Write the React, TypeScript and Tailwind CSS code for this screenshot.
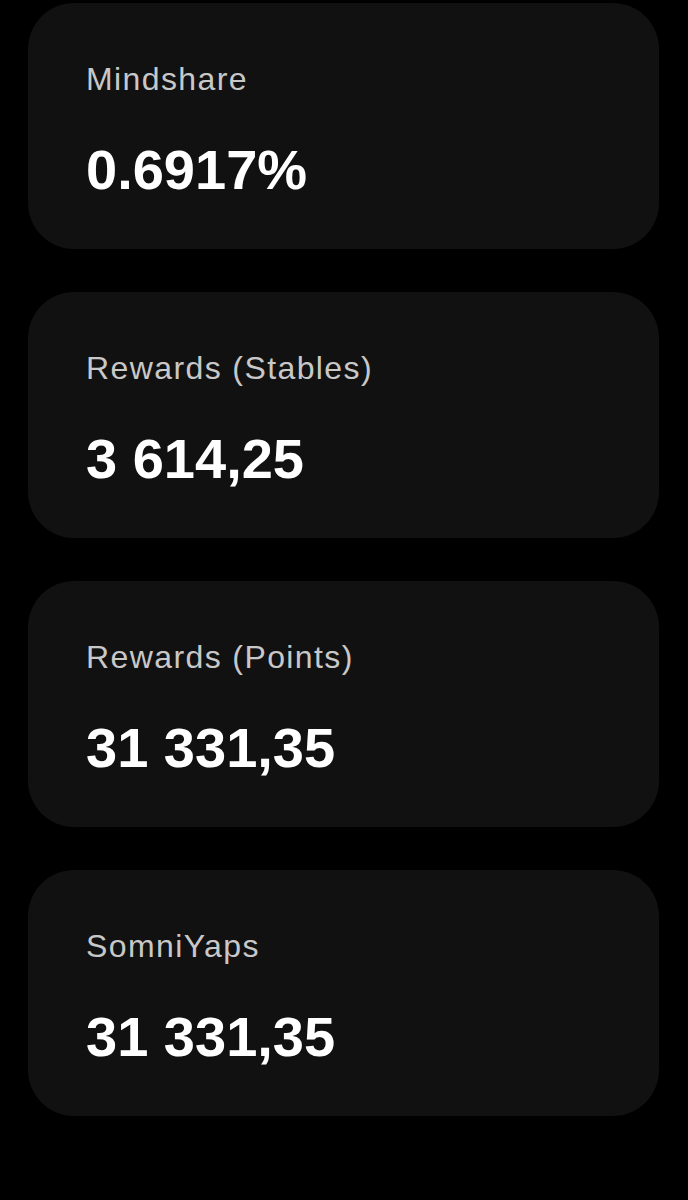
const stats = [
  { label: "Mindshare", value: "0.6917%" },
  { label: "Rewards (Stables)", value: "3 614,25" },
  { label: "Rewards (Points)", value: "31 331,35" },
  { label: "SomniYaps", value: "31 331,35" },
];

const StatCard = ({ label, value }: { label: string; value: string }) => {
  return (
    <div className="h-[246px] rounded-[46px] bg-[#111111] pl-[58px] pt-[60px]">
      <p className="text-[32px] leading-[32px] tracking-[1.4px] text-[#c8c8c8]">{label}</p>
      <p className="mt-[47px] text-[56px] leading-[56px] font-bold text-white">{value}</p>
    </div>
  );
};

export default function App() {
  return (
    <div
      className="min-h-[1200px] w-[688px] bg-black pl-[28px] pr-[29px] pt-[3px] flex flex-col gap-[43px]"
      style={{ fontFamily: '"Liberation Sans", Arial, sans-serif' }}
    >
      {stats.map((s) => (
        <StatCard key={s.label} label={s.label} value={s.value} />
      ))}
    </div>
  );
}
